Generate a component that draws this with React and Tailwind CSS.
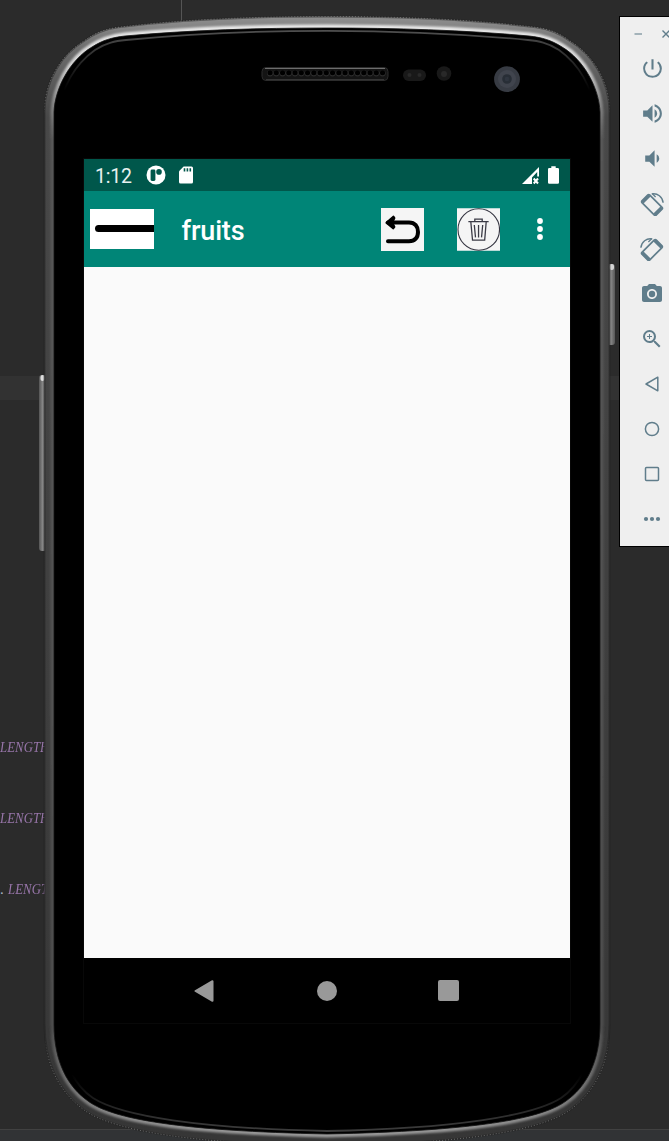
import React from "react";
import { MdPowerSettingsNew, MdVolumeUp, MdVolumeDown, MdCameraAlt, MdZoomIn } from "react-icons/md";

const OUTER =
  "M44.5 110 C45 80 62 54 84 41 C96 32 106 29 118 27.3 C180 19.5 250 16.5 327 16.5 C404 16.5 474 19.5 536 27.3 C548 29 558 32 570 41 C592 54 609 80 609.5 110 V1024 C609.5 1062 597 1090 570 1110 C542 1131 454 1145 327 1145 C200 1145 112 1131 84 1110 C57 1090 44.5 1062 44.5 1024 Z";
const INNER =
  "M54 112 C55 88 70 60 92 47 C103 40 112 37.5 125 36 C190 30 260 28 327 28 C394 28 464 30 529 36 C542 37.5 551 40 562 47 C584 60 599 88 600 112 V1024 C600 1062 586 1087 566 1101 C542 1119 474 1131 327 1134 C180 1131 112 1119 88 1101 C68 1087 54 1062 54 1024 Z";
const RIM =
  "M60 110 C62 88 74 65 95 50 C106 42.5 116 41 126 40 C200 33 260 30.8 327 30.8 C394 30.8 454 33 528 40 C538 41 548 42.5 559 50 C580 65 592 88 594 110 M593 1040 C589 1060 582 1084 561 1098 C533 1116 454 1128.5 327 1131 C200 1128.5 121 1116 93 1098 C72 1084 65 1060 61 1040";

function PhoneBody() {
  return (
    <svg className="absolute left-0 top-0" width="669" height="1141" viewBox="0 0 669 1141">
      <defs>
        <linearGradient id="shell" gradientUnits="userSpaceOnUse" x1="0" y1="16" x2="0" y2="1141">
          <stop offset="0" stopColor="#909090" />
          <stop offset="0.03" stopColor="#6c6c6c" />
          <stop offset="0.09" stopColor="#484848" />
          <stop offset="1" stopColor="#363636" />
        </linearGradient>
        <linearGradient id="shine" gradientUnits="userSpaceOnUse" x1="0" y1="16" x2="0" y2="1141">
          <stop offset="0" stopColor="#f0f0f0" />
          <stop offset="0.045" stopColor="#d0d0d0" />
          <stop offset="0.075" stopColor="#8a8a8a" />
          <stop offset="0.11" stopColor="#585858" />
          <stop offset="0.9" stopColor="#4e4e4e" />
          <stop offset="0.97" stopColor="#808080" />
          <stop offset="1" stopColor="#a0a0a0" />
        </linearGradient>
        <linearGradient id="rim" gradientUnits="userSpaceOnUse" x1="0" y1="30" x2="0" y2="1135">
          <stop offset="0" stopColor="#505050" />
          <stop offset="0.02" stopColor="#343434" />
          <stop offset="0.055" stopColor="#000000" />
          <stop offset="0.945" stopColor="#000000" />
          <stop offset="0.98" stopColor="#2c2c2c" />
          <stop offset="1" stopColor="#404040" />
        </linearGradient>
        <linearGradient id="speckle" gradientUnits="userSpaceOnUse" x1="0" y1="0" x2="0" y2="1141">
          <stop offset="0.08" stopColor="#b0b0b0" />
          <stop offset="0.1" stopColor="#b0b0b0" stopOpacity="0" />
          <stop offset="0.91" stopColor="#b0b0b0" stopOpacity="0" />
          <stop offset="0.93" stopColor="#b0b0b0" />
        </linearGradient>
        <linearGradient id="key" x1="0" y1="0" x2="1" y2="0">
          <stop offset="0" stopColor="#555" />
          <stop offset="0.5" stopColor="#8c8c8c" />
          <stop offset="1" stopColor="#555" />
        </linearGradient>
        <filter id="soft" x="-5%" y="-5%" width="110%" height="110%">
          <feGaussianBlur stdDeviation="0.8" />
        </filter>
      </defs>
      <rect x="39" y="375" width="8" height="176" rx="3" fill="url(#key)" />
      <rect x="40.5" y="375" width="4" height="6" rx="2" fill="#dcdcdc" />
      <rect x="606" y="264" width="9" height="81" rx="3" fill="url(#key)" />
      <rect x="609.5" y="264" width="4.5" height="6" rx="2" fill="#d4d4d4" />
      <path d={OUTER} fill="url(#shell)" />
      <path d={OUTER} fill="none" stroke="#202020" strokeOpacity="0.5" strokeWidth="2" />
      <path d={OUTER} fill="none" stroke="url(#speckle)" strokeOpacity="0.6" strokeWidth="0.8" strokeDasharray="1 2" />
      <path d={INNER} fill="none" stroke="url(#shine)" strokeWidth="7" filter="url(#soft)" />
      <path d={INNER} fill="#000" stroke="#141414" strokeWidth="0.8" />
      <path d={RIM} fill="none" stroke="url(#rim)" strokeWidth="1.8" />
      <rect x="262" y="67.5" width="126" height="13" rx="4" fill="#141414" stroke="#2c2c2c" />
      <path d="M265 68.5 H385" stroke="#6c6c6c" strokeWidth="1.2" />
      <path d="M270 73.3 H383" stroke="#2c2c2c" strokeWidth="6.2" strokeLinecap="round" strokeDasharray="0.1 6.15" />
      <path d="M270 72.7 H383" stroke="#000" strokeWidth="5" strokeLinecap="round" strokeDasharray="0.1 6.15" />
      <path d="M266 79.6 H384" stroke="#3a3a3a" strokeWidth="1" />
      <rect x="403" y="69.5" width="23" height="11.5" rx="5.7" fill="#191919" />
      <circle cx="409.5" cy="75" r="2" fill="#292929" />
      <circle cx="419.5" cy="75" r="2" fill="#292929" />
      <circle cx="444" cy="73.5" r="7.3" fill="#191919" />
      <circle cx="444" cy="74" r="3" fill="#292929" />
      <circle cx="507" cy="79.2" r="12.9" fill="#373b43" />
      <circle cx="507" cy="79" r="9" fill="#40444d" />
      <circle cx="507" cy="79" r="4.8" fill="#282e36" />
      <circle cx="507" cy="79" r="2.3" fill="#303640" />
    </svg>
  );
}

function Screen() {
  return (
    <div className="absolute left-[84px] top-[159px] flex h-[864px] w-[486px] flex-col font-['Roboto',sans-serif] text-white outline-1 outline-[#080808]">
      <div className="flex h-8 items-center bg-[#00574b] pl-[11px] pr-[11px]">
        <span className="w-[51px] pt-[3px] text-[19.5px] leading-none tracking-[-0.2px] text-[#e8f1f0]">1:12</span>
        <svg width="20" height="20" viewBox="0 0 20 20">
          <circle cx="10" cy="10" r="9.5" fill="#fff" />
          <rect x="4.6" y="4.5" width="4.8" height="11.4" rx="1.4" fill="#00574b" />
          <circle cx="13" cy="6.9" r="2.8" fill="#00574b" />
        </svg>
        <svg className="ml-[13px]" width="14" height="18" viewBox="0 0 14 18">
          <path d="M4.6 0.5 H12.5 Q14 0.5 14 2 V16 Q14 17.5 12.5 17.5 H1.5 Q0 17.5 0 16 V5.2 Z" fill="#fff" />
          <path d="M5.5 2.2 V5.5 M8.4 2.2 V5.5 M11.3 2.2 V5.5" stroke="#00574b" strokeWidth="1.6" />
        </svg>
        <svg className="ml-auto mt-0.5" width="17" height="18" viewBox="0 0 17 18">
          <path fillRule="evenodd" d="M0 17 L17 0 V9.5 H15.2 V5 L10 10.4 V17 Z" fill="#fff" />
          <path d="M11.7 11.5 L16 16.5 M16 11.5 L11.7 16.5" stroke="#fff" strokeWidth="2" />
        </svg>
        <svg className="ml-[9px]" width="11" height="18" viewBox="0 0 11 18">
          <path d="M3.3 0.3 H7.7 V2 H9.7 Q11 2 11 3.3 V16.5 Q11 17.8 9.7 17.8 H1.3 Q0 17.8 0 16.5 V3.3 Q0 2 1.3 2 H3.3 Z" fill="#fff" />
        </svg>
      </div>
      <div className="flex h-[76px] items-center bg-[#008577] pl-1.5">
        <div className="flex h-10 w-16 items-center bg-white pl-[5px]">
          <div className="mb-0.5 h-[7px] w-[59px] rounded-l-full bg-black" />
        </div>
        <h1 className="ml-[27.5px] mt-[5px] w-[199.5px] text-[27px] font-medium leading-none tracking-[-0.15px]">fruits</h1>
        <svg width="43" height="43" viewBox="0 0 43 43">
          <rect width="43" height="43" fill="#f5f5f5" />
          <path d="M7 14.5 H28 C34 14.5 37 18.5 37 24 C37 29.5 34 33.3 28 33.3 H7" fill="none" stroke="#000" strokeWidth="4" strokeLinecap="round" />
          <path d="M5.3 14.7 L12.5 8.5 L13.5 10 L11.3 14.5 L13.5 19 L12.3 20.5 Z" fill="#000" stroke="#000" strokeWidth="1.8" strokeLinejoin="round" />
        </svg>
        <svg className="ml-[32.5px]" width="43.5" height="43" viewBox="0 0 44 43">
          <rect width="44" height="43" fill="#f5f5f5" />
          <circle cx="22" cy="21.5" r="21" fill="none" stroke="#343440" strokeWidth="1.1" />
          <g fill="none" stroke="#3b3b46" strokeWidth="1.3">
            <path d="M11.5 13.5 H32 M18 13 V11 H25.5 V13 M14 14 L15.7 32.2 H28 L29.5 14" />
            <path d="M17.5 17 L18.7 29.5 M21.8 17 V29.5 M26 17 L24.8 29.5" />
          </g>
        </svg>
        <svg className="ml-[37px]" width="6" height="22" viewBox="0 0 6 22">
          <circle cx="3" cy="3" r="2.9" fill="#fff" />
          <circle cx="3" cy="11" r="2.9" fill="#fff" />
          <circle cx="3" cy="19" r="2.9" fill="#fff" />
        </svg>
      </div>
      <div className="flex-1 bg-[#fafafa]" />
      <div className="flex h-[65px] items-center bg-black pl-[110px]">
        <svg width="20" height="22" viewBox="0 0 20 22">
          <path d="M1.5 11 L18.5 1.2 V20.8 Z" fill="#999" stroke="#999" strokeWidth="2" strokeLinejoin="round" />
        </svg>
        <div className="ml-[103px] size-[20px] rounded-full bg-[#999]" />
        <div className="ml-[101px] size-[21px] rounded-xs bg-[#999]" />
      </div>
    </div>
  );
}

function RotateIcon({ flipped }) {
  return (
    <svg className={flipped ? "-scale-x-100" : ""} width="24" height="24" viewBox="0 0 24 24" fill="none" stroke="currentColor">
      <g transform="rotate(45 12 13)">
        <rect x="2" y="7.6" width="20" height="10.8" rx="1.2" strokeWidth="1.7" />
        <path d="M3.4 8 V18 M20.6 8 V18" strokeWidth="3.2" />
      </g>
      <path d="M11.7 1.9 C17.5 0.8 22.6 4.8 23.1 10.8" strokeWidth="1.4" />
      <path d="M12.2 1.6 L15.6 5" strokeWidth="1.3" />
    </svg>
  );
}

function Tool({ children }) {
  return <div className="flex h-[45px] items-center">{children}</div>;
}

function EmulatorToolbar() {
  return (
    <div className="absolute left-[619px] top-[16px] flex h-[531px] w-[60px] flex-col border border-black bg-[#efefef] pl-5 text-[#607d8b]">
      <div className="flex h-[29px] items-center pt-1">
        <svg className="-ml-[6px]" width="40" height="10" viewBox="0 0 40 10" fill="none" stroke="currentColor">
          <path d="M0.5 5 H8" strokeWidth="1.6" opacity="0.65" />
          <path d="M28.5 1.5 L35.5 8.5 M35.5 1.5 L28.5 8.5" strokeWidth="1.4" />
        </svg>
      </div>
      <Tool><MdPowerSettingsNew size={25} className="-ml-[0.5px]" /></Tool>
      <Tool><MdVolumeUp size={25} className="-ml-[0.5px]" /></Tool>
      <Tool><MdVolumeDown size={25} className="-ml-[0.5px]" /></Tool>
      <Tool><RotateIcon /></Tool>
      <Tool><RotateIcon flipped /></Tool>
      <Tool><MdCameraAlt size={24} /></Tool>
      <Tool><MdZoomIn size={24} /></Tool>
      <Tool>
        <svg width="24" height="24" viewBox="0 0 24 24" fill="none" stroke="currentColor" strokeWidth="1.5">
          <path d="M6 12 L17.8 5.2 V18.8 Z" strokeLinejoin="round" />
        </svg>
      </Tool>
      <Tool>
        <svg width="24" height="24" viewBox="0 0 24 24" fill="none" stroke="currentColor" strokeWidth="1.5">
          <circle cx="12" cy="12" r="6.6" />
        </svg>
      </Tool>
      <Tool>
        <svg width="24" height="24" viewBox="0 0 24 24" fill="none" stroke="currentColor" strokeWidth="1.5">
          <rect x="5.5" y="5.5" width="13" height="13" rx="1" />
        </svg>
      </Tool>
      <Tool>
        <svg width="24" height="24" viewBox="0 0 24 24" fill="currentColor">
          <circle cx="6" cy="12" r="2.1" />
          <circle cx="12" cy="12" r="2.1" />
          <circle cx="18" cy="12" r="2.1" />
        </svg>
      </Tool>
    </div>
  );
}

function Constant({ dotted }) {
  return (
    <div className="flex h-[71px] text-[15px] leading-[20px] text-[#9876aa]">
      {dotted && <span className="w-2 text-[#a9b7c6]">.</span>}
      <span className="origin-left scale-x-[0.85] italic tracking-[0.1px]">LENGTH</span>
    </div>
  );
}

function Editor() {
  return (
    <div className="flex h-[1141px] flex-col bg-[#2b2b2b] font-['Liberation_Serif',serif]">
      <div className="ml-[181px] h-[376px] w-px shrink-0 bg-[#555]" />
      <div className="h-6 shrink-0 bg-[#323232]" />
      <div className="flex h-[729px] shrink-0 flex-col pt-[337px]">
        <Constant />
        <Constant />
        <Constant dotted />
      </div>
      <div className="h-3 shrink-0 border-t border-[#414141] bg-[#313335]" />
    </div>
  );
}

export default function App() {
  return (
    <div className="relative h-[1141px] w-[669px] overflow-hidden">
      <Editor />
      <PhoneBody />
      <Screen />
      <EmulatorToolbar />
    </div>
  );
}
